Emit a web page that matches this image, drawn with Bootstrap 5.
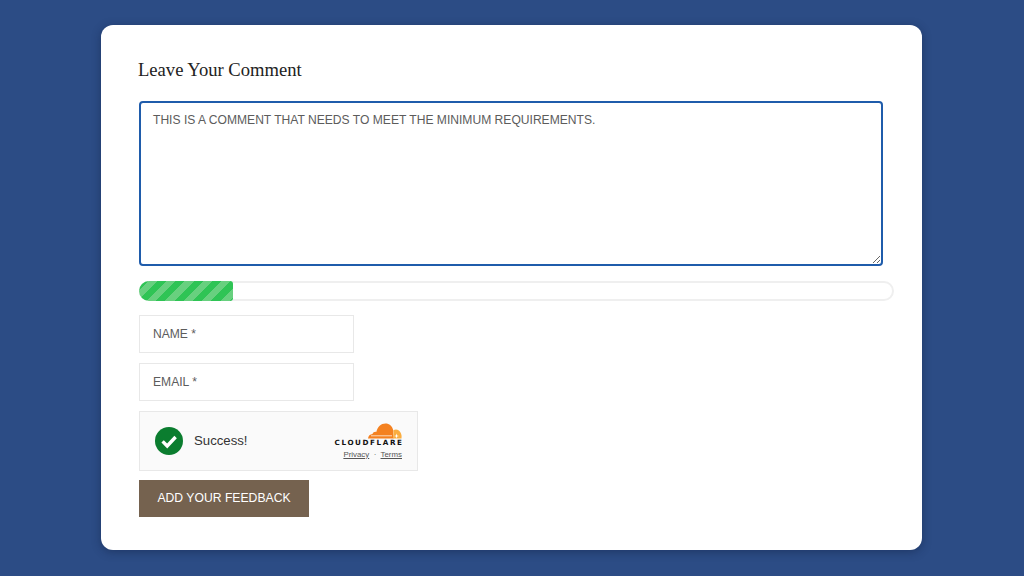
<!DOCTYPE html>
<html lang="en">
<head>
<meta charset="utf-8">
<title>Leave Your Comment</title>
<link href="https://cdn.jsdelivr.net/npm/bootstrap@5.3.0/dist/css/bootstrap.min.css" rel="stylesheet">
<style>
html, body { height: 576px; overflow: hidden; }
body { background: #2c4c85; font-family: "Liberation Sans", Arial, sans-serif; padding: 25px 102px 0 101px; }
.panel-box { height: 525px; background: #fff; border-radius: 12px; box-shadow: 0 2px 10px rgba(15,30,65,.45); padding: 33px 29px 0 38px; }
.panel-title { font-family: "Liberation Serif", "Times New Roman", serif; font-size: 18.6px; line-height: 24px; color: #222; margin: 0 0 19px -1px; font-weight: 400; }
.comment-area { display: block; width: 744px; height: 165px; border: 2px solid #1f5cab; border-radius: 4px; padding: 9px 12px; font-size: 12.1px; line-height: 16px; color: #5c5c5c; font-family: inherit; outline: 0; box-shadow: none; margin-bottom: 15px; }
.comment-area:focus { border-color: #1f5cab; box-shadow: none; color: #5c5c5c; }
.meter-track { width: 755px; height: 20px; background: #fff; border: 2px solid #efefef; border-radius: 10px; margin-bottom: 14px; overflow: visible; }
.meter-fill { height: 20px; margin: -2px 0 0 -2px; border-radius: 10px 3px 3px 10px; background-color: #2fc455; background-image: repeating-linear-gradient(135deg, #2fc455 0 6.5px, #68d07f 6.5px 13px); }
.field-line { display: block; width: 215px; height: 38px; border: 1px solid #e8e8e8; border-radius: 0; padding: 0 13px; font-size: 12.1px; color: #5c5c5c; margin-bottom: 10px; font-family: inherit; box-shadow: none; }
.field-line::placeholder { color: #5c5c5c; opacity: 1; }
.captcha-box { width: 279px; height: 60px; border: 1px solid #e8e8e8; background: #fafafa; padding: 0 15px; margin-bottom: 9px; }
.captcha-label { font-size: 13.2px; color: #333; margin-left: 11px; font-family: "Liberation Sans", sans-serif; }
.cf-word { font-family: "DejaVu Sans", sans-serif; font-weight: 700; font-size: 7.2px; letter-spacing: 1.6px; line-height: 8px; margin-right: -1.6px; color: #111; }
.cf-links { font-size: 7.9px; line-height: 9px; color: #555; margin-top: 3px; }
.cf-links a { color: #555; text-decoration: underline; }
.send-btn { display: block; width: 170px; height: 37px; background: #75624f; color: #fff; border: 0; border-radius: 0; padding: 0; font-size: 12.2px; font-weight: 400; text-transform: uppercase; }
.send-btn:hover { background: #75624f; color: #fff; }
</style>
</head>
<body>
<main class="panel-box">
  <h2 class="panel-title">Leave Your Comment</h2>
  <form>
    <textarea class="form-control comment-area">THIS IS A COMMENT THAT NEEDS TO MEET THE MINIMUM REQUIREMENTS.</textarea>
    <div class="meter-track"><div class="meter-fill" style="width: 94px"></div></div>
    <input class="form-control field-line" type="text" placeholder="NAME *">
    <input class="form-control field-line" type="text" placeholder="EMAIL *">
    <div class="captcha-box d-flex align-items-center">
      <svg width="28" height="28" viewBox="0 0 28 28" aria-hidden="true"><circle cx="14" cy="14" r="14" fill="#0b7d2f"/><path d="M7.600 14.400l4.600 4.600 8.400-9" fill="none" stroke="#fff" stroke-width="3.400"/></svg>
      <span class="captcha-label">Success!</span>
      <div class="ms-auto d-flex flex-column align-items-end">
        <svg width="34" height="16" viewBox="0 0 34 16" aria-hidden="true"><path d="M0 15.500c.3-2.500 2-4.200 4.500-4.400.6-1.600 2-2.500 3.800-2.200C9.500 4 13 .5 17.500.5c3.800 0 6.800 2.600 7.600 6.300l.4 8.700z" fill="#f48120"/><path d="M25 15.500c.5-3 .7-6 .2-8 .8-.7 1.800-1 2.800-1 3 .2 5.400 2.900 5.600 6.500l-.1 2.500z" fill="#faad3f"/><path d="M3 12.800h21" stroke="#fff" stroke-width=".7"/><path d="M28.500 10.500l.6 1.900 1.900.6-1.900.6-.6 1.900-.6-1.900-1.900-.6 1.900-.6z" fill="#fff"/></svg>
        <div class="cf-word">CLOUDFLARE</div>
        <div class="cf-links"><a href="#">Privacy</a> &nbsp;·&nbsp; <a href="#">Terms</a></div>
      </div>
    </div>
    <button type="button" class="btn send-btn">Add Your Feedback</button>
  </form>
</main>
</body>
</html>
